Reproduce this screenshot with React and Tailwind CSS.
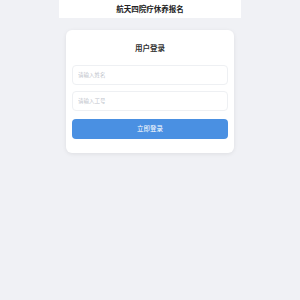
import React from 'react';

const App = () => {
  return (
    <div className="min-h-[300px] w-full bg-[#f0f1f5] font-['Noto_Sans_CJK_SC','Noto_Sans',sans-serif]">
      <div className="mx-auto w-[182px]">
        {/* Header */}
        <div className="h-[18px] bg-white flex items-center justify-center">
          <h1 className="text-[7.5px] font-bold text-[#222] leading-none">航天四院疗休养报名</h1>
        </div>

        {/* Login card */}
        <div className="mx-[7px] mt-[12px] rounded-[6px] bg-white px-[6px] pt-[14px] pb-[14px] shadow-[0_1px_4px_rgba(0,0,0,0.08)]">
          <h2 className="text-center text-[7.5px] font-semibold text-[#333] leading-none mb-[13px]">用户登录</h2>

          <div className="flex flex-col gap-[6px]">
            <input
              type="text"
              placeholder="请输入姓名"
              className="h-[20px] w-full rounded-[4px] border border-[#eef0f3] px-[5px] text-[5.5px] text-[#333] outline-none placeholder:text-[#c0c4cc]"
            />
            <input
              type="text"
              placeholder="请输入工号"
              className="h-[20px] w-full rounded-[4px] border border-[#eef0f3] px-[5px] text-[5.5px] text-[#333] outline-none placeholder:text-[#c0c4cc]"
            />
          </div>

          <button className="mt-[8px] h-[20px] w-full rounded-[4px] bg-[#4a90e2] text-[6.5px] text-white leading-none">
            立即登录
          </button>
        </div>
      </div>
    </div>
  );
};

export default App;
